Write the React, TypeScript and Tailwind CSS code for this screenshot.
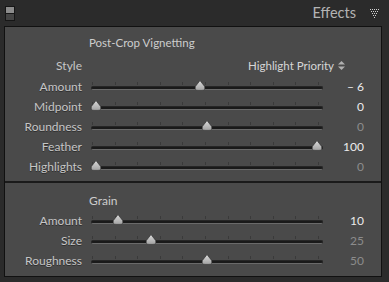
import React from "react";

interface ISlider {
  label: string;
  value: string;
  pos: number; // 0..1
  active: boolean;
}

const vignette: Array<ISlider> = [
  { label: "Amount", value: "\u2013 6", pos: 0.47, active: true },
  { label: "Midpoint", value: "0", pos: 0, active: true },
  { label: "Roundness", value: "0", pos: 0.5, active: false },
  { label: "Feather", value: "100", pos: 1, active: true },
  { label: "Highlights", value: "0", pos: 0, active: false },
];

const grain: Array<ISlider> = [
  { label: "Amount", value: "10", pos: 0.1, active: true },
  { label: "Size", value: "25", pos: 0.25, active: false },
  { label: "Roughness", value: "50", pos: 0.5, active: false },
];

const ticks = [0, 1, 2, 3, 4, 5, 6, 7, 8, 9, 10];

function Thumb() {
  return (
    <svg width="12" height="11" viewBox="0 0 12 11">
      <defs>
        <linearGradient id="tg" x1="0" y1="0" x2="0" y2="1">
          <stop offset="0" stopColor="#dadada" />
          <stop offset="1" stopColor="#a2a2a2" />
        </linearGradient>
      </defs>
      <path
        d="M6 0.6 L10.6 6.4 Q11.8 10.4 8 10.4 H4 Q0.2 10.4 1.4 6.4 Z"
        fill="url(#tg)"
        stroke="#2a2a2a"
        strokeWidth="0.6"
      />
    </svg>
  );
}

function SliderRow({ item }: { item: ISlider }) {
  return (
    <div className="flex h-[20px] items-center">
      <div className="w-[77px] text-right text-[12px] leading-none text-[#c6c6c6] [text-shadow:0_1px_0_#2e2e2e]">
        {item.label}
      </div>
      <div className="relative ml-[9px] h-[20px] w-[232px]">
        {ticks.map((t) => (
          <div
            key={t}
            className="absolute top-[5px] h-[3px] w-px bg-[#3a3a3a]"
            style={{ left: 1 + t * 22.6 }}
          />
        ))}
        <div className="absolute left-0 right-0 top-[9px] h-[4px] rounded-full border border-[#262626] border-b-[#6a6a6a] bg-[#1a1a1a]" />
        <div
          className="absolute top-[3px]"
          style={{ left: 5 + item.pos * 221 - 6 }}
        >
          <Thumb />
        </div>
      </div>
      <div
        className={
          "w-[41px] text-right text-[12px] leading-none " +
          (item.active ? "text-[#ececec]" : "text-[#8c8c8c]")
        }
      >
        {item.value}
      </div>
    </div>
  );
}

export default function App() {
  return (
    <div
      className="flex h-[282px] w-[389px] flex-col bg-[#2b2b2b]"
      style={{ fontFamily: "Lato, 'Open Sans', sans-serif" }}
    >
      {/* header */}
      <div className="flex h-[26px] items-center">
        <div className="ml-[5px] flex h-[15px] w-[10px] flex-col border border-[#161616] bg-[#161616]">
          <div className="h-[6px] bg-[#8c8c8c]" />
          <div className="mt-px flex-1 bg-[#454545]" />
        </div>
        <div className="flex-1" />
        <div className="text-[14.5px] leading-none text-[#b4b4b4]">Effects</div>
        <svg className="ml-[14px] mr-[10px]" width="9" height="9" viewBox="0 0 9 9">
          {[0, 1, 2, 3, 4].map((r) =>
            Array.from({ length: 5 - r }).map((_, c) => (
              <rect
                key={r + "-" + c}
                x={r + c * 2}
                y={r * 2}
                width="1"
                height="1"
                fill="#d0d0d0"
              />
            ))
          )}
        </svg>
      </div>

      {/* panel */}
      <div className="ml-[4px] mr-[7px] flex flex-col border border-[#111] bg-[#4a4a4a]">
        <div className="flex flex-col pb-[4px] pt-[5px]">
          <div className="flex h-[22px] items-center pl-[84px] text-[11.5px] leading-none text-[#cdcdcd]">
            Post-Crop Vignetting
          </div>
          <div className="flex h-[23px] items-center text-[12px] leading-none">
            <div className="w-[77px] text-right text-[#c6c6c6]">Style</div>
            <div className="flex-1" />
            <div className="flex items-center text-[11.5px] text-[#d6d6d6]">
              Highlight Priority
              <svg className="ml-[4px]" width="7" height="9" viewBox="0 0 7 9">
                <path d="M3.5 0 L7 3.5 H0 Z" fill="#b0b0b0" />
                <path d="M3.5 9 L7 5.5 H0 Z" fill="#b0b0b0" />
              </svg>
            </div>
            <div className="w-[36px]" />
          </div>
          {vignette.map((item) => (
            <SliderRow key={item.label} item={item} />
          ))}
        </div>
        <div className="h-[2px] bg-[#1a1a1a]" />
        <div className="flex flex-col pb-[5px] pt-[7px]">
          <div className="flex h-[21px] items-center pl-[84px] text-[12px] leading-none text-[#cdcdcd]">
            Grain
          </div>
          {grain.map((item) => (
            <SliderRow key={item.label} item={item} />
          ))}
        </div>
      </div>
    </div>
  );
}
